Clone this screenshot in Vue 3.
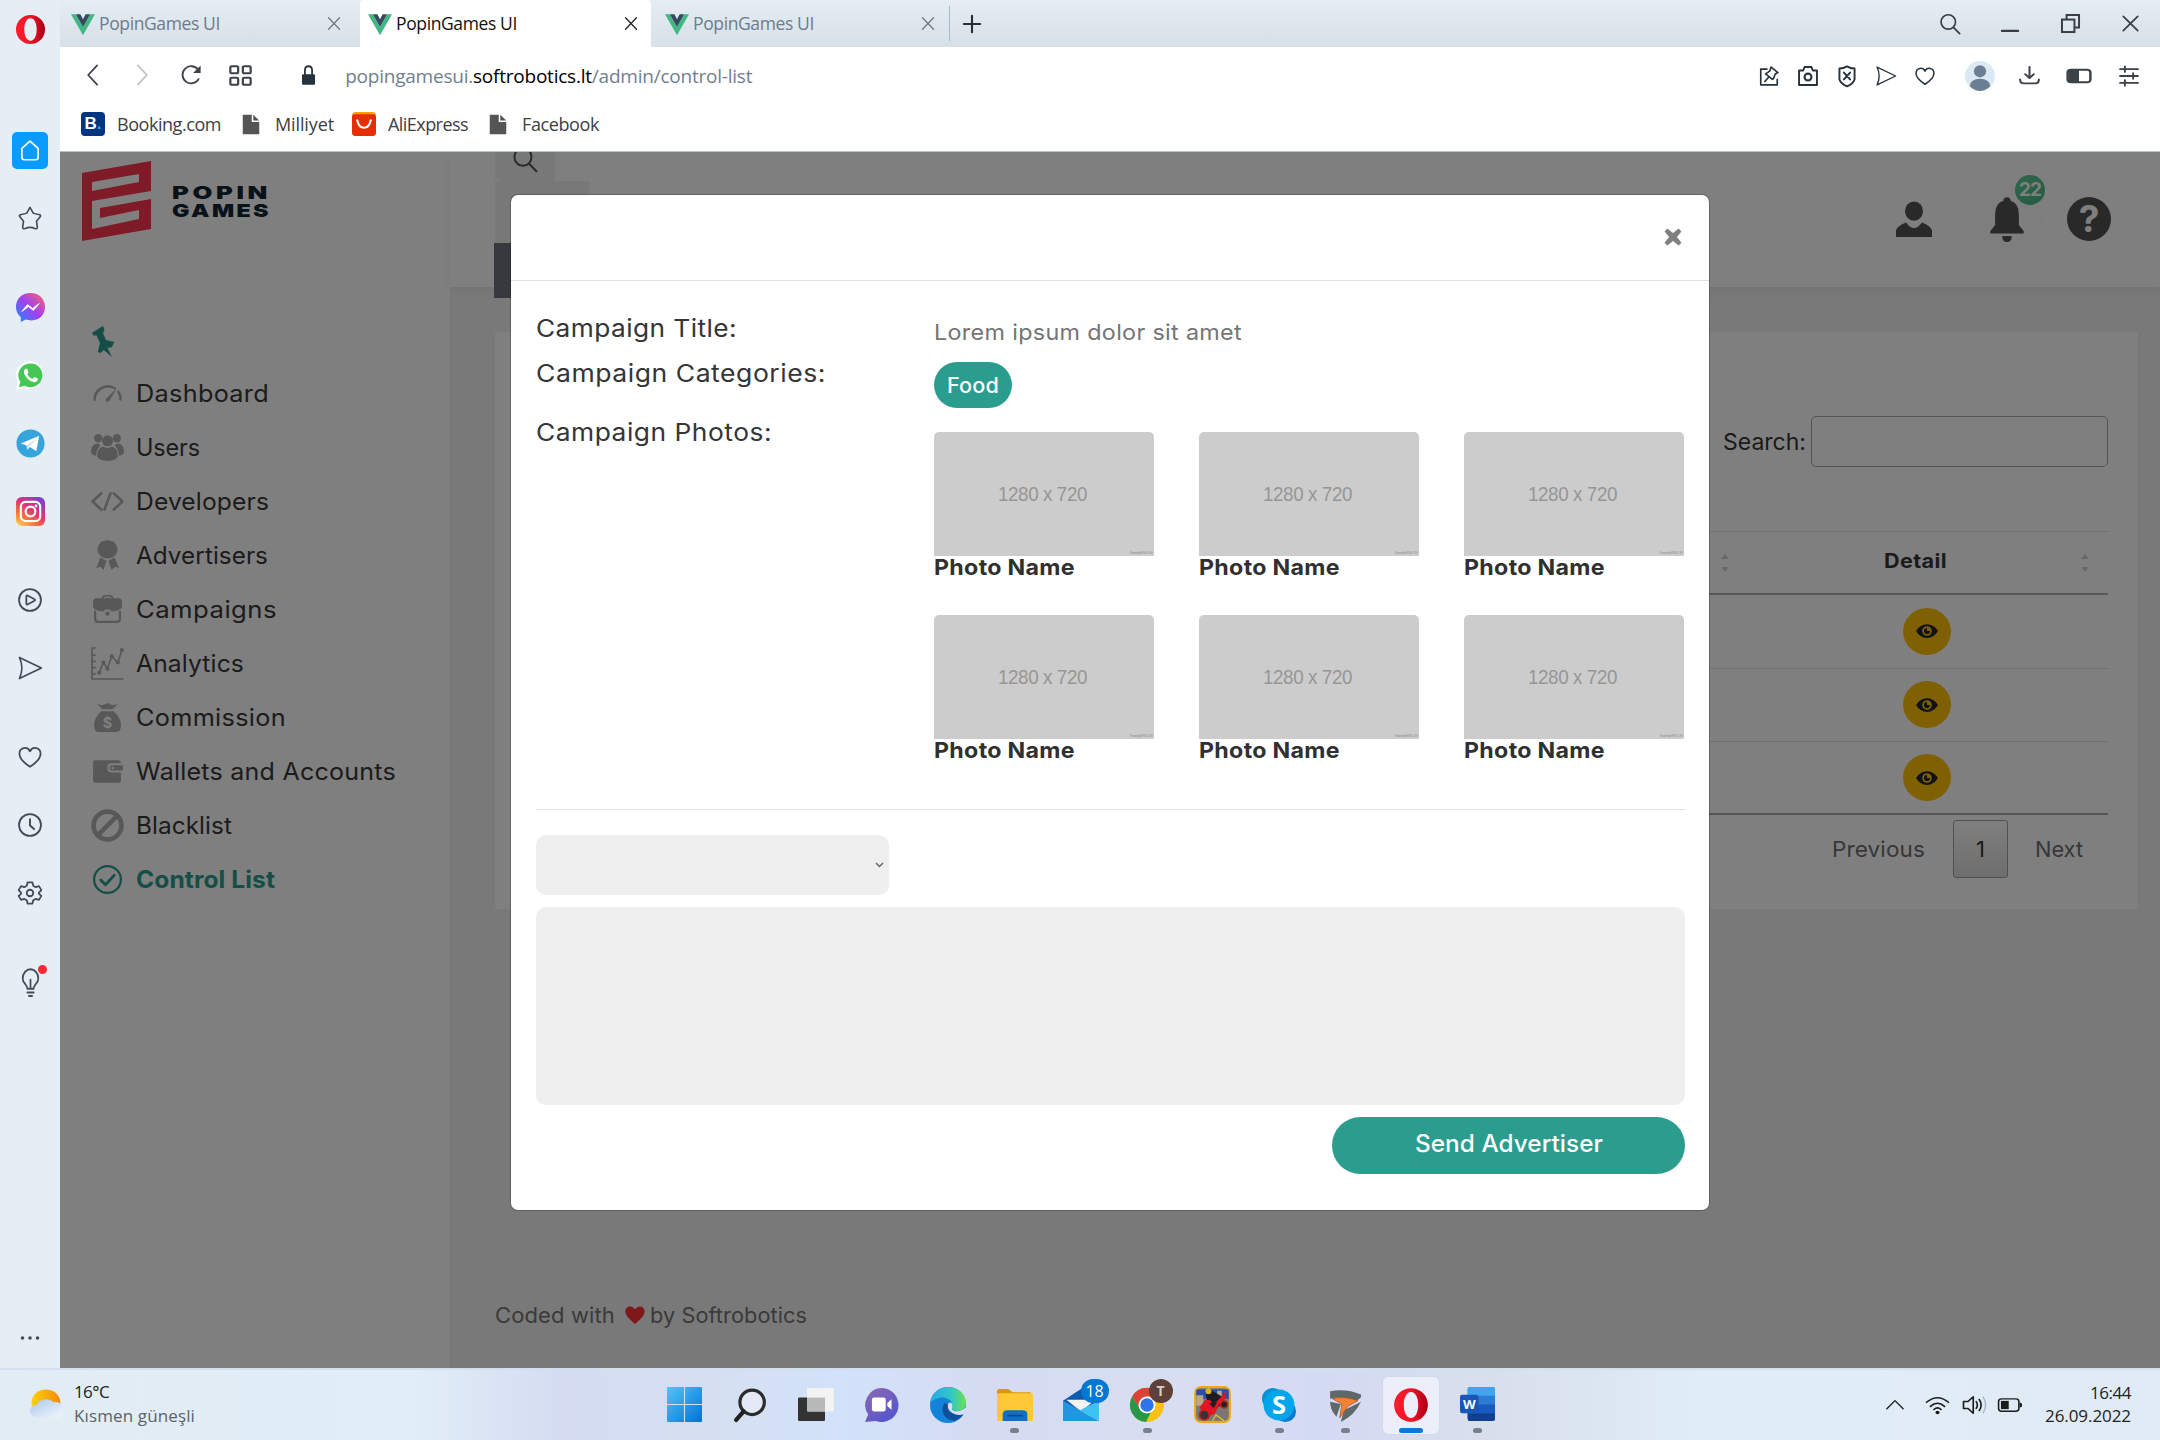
<script setup>
import { h } from 'vue'

// Fits a label to the given width in pixels, by letter spacing alone or,
// with the .wide modifier, mostly by widening the letters themselves.
const vFit = {
  mounted(el, { value, modifiers }) {
    const natural = el.getBoundingClientRect().width
    const share = modifiers.wide ? 0.3 : 1
    el.style.letterSpacing = ((value - natural) * share) / el.textContent.length + 'px'
    if (modifiers.wide) {
      const spaced = natural + (value - natural) * share
      el.style.display = 'inline-block'
      el.style.width = value + 'px'
      el.style.textAlign = 'left'
      el.style.transformOrigin = '0 50%'
      el.style.transform = `scaleX(${value / spaced})`
    }
  },
}

const line = (d, w = 2) =>
  `<path d="${d}" fill="none" stroke="currentColor" stroke-width="${w}" stroke-linecap="round" stroke-linejoin="round"/>`
const fill = (d, c = 'currentColor') => `<path d="${d}" fill="${c}"/>`

const icons = {
  opera: '<defs><linearGradient id="op" x1="0" x2="1"><stop offset="0" stop-color="#ff1b2d"/><stop offset=".5" stop-color="#f01528"/><stop offset="1" stop-color="#a70014"/></linearGradient></defs><path fill-rule="evenodd" fill="url(#op)" d="M16 1a15 15 0 1 0 0 30a15 15 0 1 0 0-30M16 4.500c4 0 6.400 5 6.400 11.500S20 27.500 16 27.500S9.600 22.500 9.600 16S12 4.500 16 4.500"/>',
  home: line('M16 5L26 14V25Q26 28 23 28H9Q6 28 6 25V14Z'),
  star: line('M16 3L20 10Q22 11 28 12Q30 13 28 15L24 20L25 27Q25 30 22 29Q16 26 10 29Q7 30 7 27L8 20L4 15Q2 13 4 12Q10 11 12 10Z'),
  messenger: '<defs><linearGradient id="ms" x1="0" y1="1" x2="1" y2="0"><stop offset="0" stop-color="#1690ff"/><stop offset=".5" stop-color="#a040f0"/><stop offset="1" stop-color="#ff6968"/></linearGradient></defs><path fill="url(#ms)" d="M16 1C7 1 1 7 1 15.500C1 20 3 23.500 6 26V31L11 28.500C24 32 31 24 31 15.500C31 7 25 1 16 1"/><path d="M7 20L13 13L18 17L25 12L19 19L14 15Z" fill="#fff" stroke="#fff" stroke-linejoin="round"/>',
  whatsapp: '<path fill="#fff" d="M16 1A14.500 14.500 0 0 0 3 23L1 31L9.500 29A14.500 14.500 0 1 0 16 1"/><path fill="#45c655" d="M16 3.500A12.300 12.300 0 0 0 5.500 22.500L4 28L10 26.500A12.300 12.300 0 1 0 16 3.500"/><path fill="#fff" d="M11 9C9 10 8.500 13 10.500 16C13 20 16 22.500 20 23C23 22.500 24 20.500 23.500 19L20 17.500L18 19.500C15.500 18.500 14 17 12.800 14.500L14 12.800L12.500 9Z"/>',
  telegram: '<circle cx="16" cy="16" r="14.500" fill="#36a5dc"/><path fill="#fff" d="M6 16L25 8L22 24L15.500 19.500L12.500 22.500L12 18Z"/><path fill="#c8dff0" d="M12 18L22 11L14.500 19L12.500 22.500Z"/>',
  instagram: '<defs><linearGradient id="ig" x1=".1" y1="1" x2=".8" y2="0"><stop offset="0" stop-color="#ffd35c"/><stop offset=".3" stop-color="#fb7036"/><stop offset=".6" stop-color="#dc3279"/><stop offset="1" stop-color="#7b42cc"/></linearGradient></defs><rect x="1" y="1" width="30" height="30" rx="6" fill="url(#ig)"/><g fill="none" stroke="#fff" stroke-width="2.200"><rect x="6" y="6" width="20" height="20" rx="5"/><circle cx="16" cy="16" r="5"/></g><circle cx="21.700" cy="10.300" r="1.400" fill="#fff"/>',
  play: '<circle cx="16" cy="16" r="13.500" fill="none" stroke="currentColor" stroke-width="2.200"/>' + line('M11.500 11Q12 10 13 10.500L21.500 15Q23 16 21.500 17L13 21.500Q11.500 22 11.500 21Z', 2.2),
  send: line('M3 3L30 16L3 29Q9 16 3 3Z'),
  heart: line('M16 28C9 23.500 3 18 3 12C3 4 13 2.500 16 9C19 2.500 29 4 29 12C29 18 23 23.500 16 28Z', 2.2),
  clock: '<circle cx="16" cy="16" r="13.500" fill="none" stroke="currentColor" stroke-width="2.200"/>' + line('M16 9V16.500L21 21', 2.4),
  gear: line('M13 3H19L20 7L23 8.800L27 7.500L30 12.500L27 15.500V17L30 19.500L27 24.500L23 23.300L20 25L19 29H13L12 25L9 23.300L5 24.500L2 19.500L5 17V15.500L2 12.500L5 7.500L9 8.800L12 7Z', 2.2) + '<circle cx="16" cy="16" r="4" fill="none" stroke="currentColor" stroke-width="2.200"/>',
  bulb: line('M12 23C12 18 6 17 6 11.500A10 10 0 0 1 26 11.500C26 17 20 18 20 23ZM12 27H20M14 31H18M16 22V13', 2.2),
  dots: '<g fill="currentColor"><circle cx="6" cy="16" r="2.400"/><circle cx="16" cy="16" r="2.400"/><circle cx="26" cy="16" r="2.400"/></g>',
  vue: fill('M0 3H6.500L16 20L25.500 3H32L16 31Z', '#41b883') + fill('M6.500 3H12.500L16 9.500L19.500 3H25.500L16 20Z', '#35495e'),
  x: line('M5 5L27 27M27 5L5 27', 2.6),
  plus: line('M16 3V29M3 16H29', 3.4),
  search: '<circle cx="13.500" cy="13" r="10.500" fill="none" stroke="currentColor" stroke-width="2.400"/>' + line('M21 21L30 30', 2.6),
  min: line('M3 27H29', 3.4),
  restore: '<g fill="none" stroke="currentColor" stroke-width="3"><path d="M10 10V3H29V22H23"/><rect x="3" y="10" width="19" height="19"/></g>',
  back: line('M22 2L9 16L22 30', 2.6),
  fwd: line('M10 2L23 16L10 30', 2.6),
  reload: line('M27 22A12.500 12.500 0 1 1 26 8', 2.6) + fill('M30 2V13H19Z'),
  grid: '<g fill="none" stroke="currentColor" stroke-width="2.800"><rect x="3" y="3" width="10" height="10" rx="2"/><rect x="19" y="3" width="10" height="10" rx="2"/><rect x="3" y="19" width="10" height="10" rx="2"/><rect x="19" y="19" width="10" height="10" rx="2"/></g>',
  lock: '<rect x="5" y="14" width="22" height="16" rx="2" fill="currentColor"/>' + line('M10 15V8Q10 2 16 2Q22 2 22 8V15', 3),
  pinbox: line('M13 6H4V29H28V21M19 3L29 11L25 13L23 19L21 21L11 13L17 9ZM16 17L10 24', 2.4),
  camera: line('M3 8H9L11 3H21L23 8H29V29H3Z', 2.8) + '<circle cx="16" cy="17.500" r="5" fill="none" stroke="currentColor" stroke-width="3"/>',
  shield: line('M16 2Q21 5 27 5V21Q25 27 16 31Q7 27 5 21V5Q11 5 16 2ZM11.500 11L20.500 21M20.500 11L11.500 21', 2.8),
  avatar: '<circle cx="16" cy="16" r="16" fill="#dce8f3"/><circle cx="16" cy="11" r="6.500" fill="#6a7f94"/><path fill="#6a7f94" d="M5 27Q6 19 16 19Q26 19 27 27Q22 32 16 32Q10 32 5 27"/>',
  download: line('M16 3V19M10 14L16 20L22 14M3 22Q3 28 8 28H24Q29 28 29 22', 2.8),
  split: '<rect x="2" y="6" width="28" height="20" rx="4" fill="none" stroke="currentColor" stroke-width="3"/>' + fill('M3 6H16V26H3Z'),
  sliders: line('M3 6H29M3 16H29M3 26H29M10 2V10M22 12V20M10 22V30', 2.8),
  file: fill('M5 1H17V12H27V31H5Z', '#555') + fill('M19 1L27 10H19Z', '#555'),
  ali: '<rect x="0" y="0" width="32" height="32" rx="5" fill="#ff9a00"/><path fill="#e62e04" d="M0 7Q0 3 4 3H28Q32 3 32 7V27Q32 32 27 32H5Q0 32 0 27Z"/><path d="M7 11Q9 21 16 21Q23 21 25 11" fill="none" stroke="#fff" stroke-width="2.800" stroke-linecap="round"/>',
  emblem: '<path fill="#ff344e" fill-rule="evenodd" d="M0 12L69 0V30L10 40V68L57 58V49L18 57V47L69 38V68L0 80ZM10 21V30L57 21V13Z"/>',
  pin: fill('M1 8L16 1L18 5L16 8L20 15L31 17L28 22L22 23L28 32L17 25L13 28L9 27L12 18L7 10L4 11Z'),
  gauge: '<path d="M3.500 23A13 13 0 0 1 24 11.500M26 13.500A13 13 0 0 1 28.500 23" fill="none" stroke="currentColor" stroke-width="2.300"/>' + fill('M25 11L17.500 23.500A2 2 0 0 1 14.500 21Z'),
  users: '<g fill="currentColor"><circle cx="7" cy="7" r="4"/><circle cx="25" cy="7" r="4"/><path d="M0 20Q0 12 7 12L9 14Q5 18 5 24Q0 23 0 20M32 20Q32 12 25 12L23 14Q27 18 27 24Q32 23 32 20"/><circle cx="16" cy="9.500" r="5.300"/><path d="M6 25Q6 16 12 15Q16 18 20 15Q26 16 26 25Q24 29 16 29Q8 29 6 25"/></g>',
  code: line('M10 8L1.500 16L10 24M22 8L30.500 16L22 24M19 8L13 24', 2.4),
  award: fill('M16 1L19 2L22 2.500L24 5L25.500 8L25.500 12L24 15L21 18L16 19L11 18L8 15L6.500 12L6.500 8L8 5L10 2.500L13 2ZM9 18L15 21L12 30L9 27L5 28ZM23 18L17 21L20 30L23 27L27 28Z'),
  bag: fill('M2 9Q2 5 5 5H10Q11 2 13 2H19Q21 2 22 5H27Q30 5 30 9V14Q27 18 19 18V16H13V18Q5 18 2 14Z') + line('M4 18V25Q4 28 7 28H25Q28 28 28 25V18', 2.2) + '<circle cx="16" cy="20" r="2" fill="currentColor"/><path d="M12.500 5.500Q13 4 14.500 4H17.500Q19 4 19.500 5.500" stroke="#fff" stroke-width="1.200" fill="none"/>',
  chart: line('M4 1H1V31H31M1 8H4M1 14H4M1 20H4M1 26H4M8 25L12 15L16 21L20 9L26 15L30 3', 1.6) + '<g fill="currentColor"><circle cx="8" cy="25" r="2"/><circle cx="12" cy="15" r="2"/><circle cx="16" cy="21" r="2"/><circle cx="20" cy="9" r="2"/><circle cx="26" cy="15" r="2"/><circle cx="30" cy="3" r="2"/></g>',
  money: fill('M6 3L11 4L16 2L21 4L26 3L21 8H11ZM10 10H22Q29 16 29 24Q29 30 25 30H7Q3 30 3 24Q3 16 10 10') + '<text x="16" y="26" text-anchor="middle" font-family="Inter, sans-serif" font-weight="700" font-size="14" fill="#fff">$</text>',
  wallet: fill('M4 5H26Q29 5 29 8H20Q16 8 16 12Q16 17 20 17H29V25Q29 27 27 27H4Q2 27 2 25V7Q2 5 4 5M20 10H31V15H20Q18 15 18 12.500Q18 10 20 10') + '<circle cx="21" cy="12.500" r="1.200" fill="#fff"/>',
  ban: '<circle cx="16" cy="16" r="13.500" fill="none" stroke="currentColor" stroke-width="4.500"/><path d="M25 7L7 25" stroke="currentColor" stroke-width="4.500"/>',
  check: '<circle cx="16" cy="16" r="13" fill="none" stroke="currentColor" stroke-width="2.200"/>' + line('M9.500 16.500L14 21L22.500 12', 2.8),
  user: '<ellipse cx="16" cy="9" rx="8" ry="8.500" fill="currentColor"/>' + fill('M0 32V26Q1 22 9 19Q16 29 23 19Q31 22 32 26V32Z'),
  bell: fill('M16 1Q19 1 19 4Q26 6 26 15V24L30 29V31H2V29L6 24V15Q6 6 13 4Q13 1 16 1M12 33H20Q20 38 16 38Q12 38 12 33'),
  eye: '<path fill="currentColor" fill-rule="evenodd" d="M0 16Q6 6 16 6Q26 6 32 16Q26 26 16 26Q6 26 0 16M16 9A7 7 0 1 0 16 23A7 7 0 1 0 16 9"/><path fill="currentColor" d="M16 11.500A4.500 4.500 0 1 0 20.500 16H16Z"/>',
  love: fill('M16 29C8 22 2 17 2 11C2 3 12 1 16 8C20 1 30 3 30 11C30 17 24 22 16 29'),
  cross: fill('M6 1L16 9L26 1L31 6L23 16L31 26L26 31L16 23L6 31L1 26L9 16L1 6Z'),
  weather: '<defs><linearGradient id="sn" x1="0" x2="1"><stop offset="0" stop-color="#ffcf08"/><stop offset="1" stop-color="#f28c0c"/></linearGradient><linearGradient id="cl" x1="0" y1="0" x2="1" y2="1"><stop offset="0" stop-color="#a9c6ef"/><stop offset="1" stop-color="#f4f7fb"/></linearGradient></defs><circle cx="15" cy="14" r="13.500" fill="url(#sn)"/><path fill="url(#cl)" d="M7 30A6.500 6.500 0 0 1 6 17A9.500 9 0 0 1 22 14Q31 13 31.500 22Q31 30 25 30Z"/>',
  win: '<defs><linearGradient id="wn" x1="0" y1="0" x2="1" y2="1"><stop offset="0" stop-color="#4cc8fb"/><stop offset="1" stop-color="#0a6fd0"/></linearGradient></defs><path fill="url(#wn)" d="M0 1Q0 0 1 0H15.500V15.500H0ZM16.500 0H31Q32 0 32 1V15.500H16.500ZM0 16.500H15.500V32H1Q0 32 0 31ZM16.500 16.500H32V31Q32 32 31 32H16.500Z"/>',
  find: '<circle cx="18" cy="13.500" r="11.500" fill="#e3e8f5" stroke="#2b2b2b" stroke-width="3"/><path d="M10 22L3 30" stroke="#222" stroke-width="4" stroke-linecap="round"/>',
  tasks: '<rect x="0" y="9" width="24" height="22" rx="1" fill="#333"/><rect x="8" y="0" width="24" height="22" rx="1" fill="#f3f3f3"/><rect x="8" y="9" width="16" height="13" fill="#b9b9b9"/>',
  chat: '<defs><linearGradient id="ch" x1="0" y1="0" x2=".7" y2="1"><stop offset="0" stop-color="#9068b4"/><stop offset="1" stop-color="#5357cc"/></linearGradient></defs><path fill="url(#ch)" d="M16 0A16 16 0 1 1 10 31L0 32L3 25A16 16 0 0 1 16 0"/><rect x="6.500" y="9" width="13" height="13" rx="2" fill="#fff"/><path fill="#fff" d="M21 14L25 10.500V20.500L21 17Z"/>',
  edge: '<defs><linearGradient id="e1" x1="0" x2="1"><stop offset="0" stop-color="#27a9e6"/><stop offset=".6" stop-color="#32c7c5"/><stop offset="1" stop-color="#6be24a"/></linearGradient></defs><circle cx="16" cy="16" r="16" fill="#1283d8"/><path fill="url(#e1)" d="M0 14C2 4 9 0 16 0C27 0 32 8 32 14C32 20 27 22 22 21C18 20 20 18 20 16C20 12 16 10 11 9Q4 10 0 14"/><path fill="#114f9d" d="M13 14C8 22 14 30 22 30Q28 28 30 23Q24 26 19 23C15 21 16 18 16 16Z"/><path fill="#d8e0f5" d="M16 15Q19 12 20 16C20 19 18 20 22 21.500Q28 22 32 18V20L30 24Q25 26 20 23Q15 20 16 15"/>',
  folder: '<path fill="#d99a00" d="M0 3Q0 1 2 1H10L14 4H30V10H0Z"/><rect x="0" y="5" width="32" height="26" rx="1" fill="#ffc936"/><path fill="#0f6fc4" d="M5 31V25Q5 21 9 21H23Q27 21 27 25V31Z"/><path stroke="#06478f" stroke-width="1.500" d="M9 26H23"/>',
  mail: '<path fill="#0b5cae" d="M0 12L16 1L32 12V22H0Z"/><path fill="#f2f2f2" d="M3 11H29L16 22Z"/><path fill="#2095e0" d="M0 12L32 31H0Z"/><path fill="#3fc1f3" d="M32 12V31L15 21Z"/>',
  chrome: '<circle cx="16" cy="16" r="16" fill="#fbc116"/><path fill="#dd4034" d="M2 8A16 16 0 0 1 30 8H16L9 20Z"/><path fill="#279847" d="M2 8L10 21L20 22L15 32A16 16 0 0 1 2 8"/><circle cx="16" cy="16" r="8" fill="#fff"/><circle cx="16" cy="16" r="6.300" fill="#2f74ea"/>',
  moto: '<rect x="1" y="1" width="30" height="30" rx="5" fill="#777" stroke="#eca915" stroke-width="1.800"/><path fill="#284eae" d="M2 3H30V11H2Z"/><path fill="#b9a88a" d="M2 8H8V17H2ZM20 4H24V10H20Z"/><path fill="#1d1c21" d="M10 5Q13 1 17 5L24 9L27 14L20 19L12 18Z"/><circle cx="12.500" cy="4.500" r="2.600" fill="#dcb21c"/><circle cx="9" cy="25" r="4.200" fill="#333" stroke="#c81b1b" stroke-width="1.500"/><circle cx="26" cy="16" r="3" fill="#222" stroke="#b22" stroke-width="1.300"/><path fill="#e21622" d="M5 18L10 12L14 12L17 16L23 10L27 5L27 11L22 16L18 24L13 26L12 21L6 21Z"/><path fill="#1d1c21" d="M13 15L20 14L17 19Z"/><path stroke="#dfc528" fill="none" d="M16 30L19 25L26 30"/>',
  skype: '<circle cx="10" cy="10" r="10" fill="#0c91d4"/><circle cx="22" cy="22" r="10" fill="#0b78d4"/><circle cx="16" cy="16" r="14.500" fill="#00a5ea"/><text x="16" y="24.500" text-anchor="middle" font-family="Open Sans, sans-serif" font-weight="700" font-size="24" fill="#fff">S</text>',
  tri: '<path fill="#5f686b" d="M2 3Q17 0 31 6V9L27 12Q14 7 2 10ZM2 13L12 15L8 27Q2 21 2 13M31 13Q25 26 12 32L15 21Z"/><path fill="#f58231" stroke="#a2501f" stroke-width=".7" d="M4 10Q16 7 28 12L19 17L11 28L13 15Z"/>',
  word: '<rect x="7" y="0" width="25" height="31" rx="2" fill="#2b7cd3"/><path fill="#41a5ee" d="M9 0H30Q32 0 32 2V8H7V2Q7 0 9 0"/><path fill="#185abd" d="M7 16H32V24H7Z"/><path fill="#103f91" d="M7 24H32V29Q32 31 30 31H9Q7 31 7 29Z"/><rect x="0" y="7" width="17" height="17" rx="2" fill="#1857b8"/><text x="8.500" y="20" text-anchor="middle" font-family="Open Sans, sans-serif" font-weight="700" font-size="12" fill="#fff">W</text>',
  up: line('M3 22L16 9L29 22', 2.2),
  wifi: line('M2 12Q16 -1 30 12M7 18Q16 9 25 18M11.500 22.500Q16 18 20.500 22.500', 2.2) + '<circle cx="16" cy="27" r="2.600" fill="currentColor"/>',
  sound: line('M2 11H8L15 4V28L8 21H2ZM19 11Q22 16 19 21M23 8Q28 16 23 24', 2.2) + '<path d="M28 4Q35 16 28 28" fill="none" stroke="#a9b0bd" stroke-width="1.800"/>',
  batt: '<rect x="2" y="7" width="26" height="18" rx="4" fill="none" stroke="currentColor" stroke-width="2"/><rect x="5" y="10" width="10" height="12" fill="currentColor"/><path fill="currentColor" d="M29 12L32 14V18L29 20Z"/>',
}

const Ico = (p) =>
  h('svg', { width: p.w || 26, height: p.h || p.w || 26, viewBox: p.box || '0 0 32 32', innerHTML: icons[p.n], preserveAspectRatio: 'none' })
Ico.props = ['n', 'w', 'h', 'box']

const rail = [
  ['home', 'star'],
  ['messenger', 'whatsapp', 'telegram', 'instagram'],
  ['play', 'send'],
  ['heart', 'clock', 'gear'],
]
const brands = ['messenger', 'whatsapp', 'telegram', 'instagram']
const menu = [
  ['gauge', 'Dashboard', 133],
  ['users', 'Users', 64],
  ['code', 'Developers', 133],
  ['award', 'Advertisers', 132],
  ['bag', 'Campaigns', 141],
  ['chart', 'Analytics', 108],
  ['money', 'Commission', 150],
  ['wallet', 'Wallets and Accounts', 260],
  ['ban', 'Blacklist', 96],
  ['check', 'Control List', 139],
]
const apps = [
  { n: 'win', w: 35 },
  { n: 'find', w: 34 },
  { n: 'tasks', w: 36, h: 34 },
  { n: 'chat', w: 34 },
  { n: 'edge', w: 36 },
  { n: 'folder', w: 36, h: 34, open: 1 },
  { n: 'mail', w: 36, h: 34, badge: '18' },
  { n: 'chrome', w: 34, open: 1, badge: 'T' },
  { n: 'moto', w: 37 },
  { n: 'skype', w: 34, open: 1 },
  { n: 'tri', w: 34, open: 1 },
  { n: 'opera', w: 36, active: 1 },
  { n: 'word', w: 35, open: 1 },
]
</script>

<template>
  <div class="screen">
    <div class="browser">
      <aside class="rail">
        <div class="logo"><Ico n="opera" :w="31" /></div>
        <div v-for="(g, i) in rail" :key="i" class="group">
          <div v-for="n in g" :key="n" class="slot" :class="{ home: n === 'home' }">
            <span><Ico :n="n" :w="brands.includes(n) ? 31 : 26" /></span>
          </div>
        </div>
        <div class="slot bulb"><span><Ico n="bulb" :w="25" :h="29" /><i></i></span></div>
        <div class="slot more"><Ico n="dots" :w="24" /></div>
      </aside>

      <div class="window">
        <div class="tabs">
          <div class="tab one"><Ico n="vue" :w="24" /><span v-fit="121">PopinGames UI</span><Ico n="x" :w="17" class="close" /></div>
          <div class="tab on"><Ico n="vue" :w="24" /><span v-fit="121">PopinGames UI</span><Ico n="x" :w="17" class="close" /></div>
          <div class="tab three"><Ico n="vue" :w="24" /><span v-fit="121">PopinGames UI</span><Ico n="x" :w="17" class="close" /></div>
          <Ico n="plus" :w="20" class="plus" />
          <div class="ctl">
            <div><Ico n="search" :w="22" /></div>
            <div><Ico n="min" :w="20" /></div>
            <div><Ico n="restore" :w="21" /></div>
            <div><Ico n="x" :w="21" class="dark" /></div>
          </div>
        </div>
        <div class="address">
          <div class="nav">
            <div><Ico n="back" :w="22" /></div>
            <div class="off"><Ico n="fwd" :w="22" /></div>
            <div><Ico n="reload" :w="22" /></div>
            <div><Ico n="grid" :w="25" :h="23" /></div>
          </div>
          <Ico n="lock" :w="19" :h="21" class="lock" />
          <span v-fit="407" class="url">popingamesui.<b>softrobotics.lt</b>/admin/control-list</span>
          <div class="tools">
            <div v-for="n in ['pinbox', 'camera', 'shield', 'send', 'heart']" :key="n"><Ico :n="n" :w="22" /></div>
          </div>
          <div class="tools wide">
            <div><Ico n="avatar" :w="30" /></div>
            <div><Ico n="download" :w="23" :h="21" /></div>
            <div><Ico n="split" :w="26" :h="20" /></div>
            <div><Ico n="sliders" :w="22" /></div>
          </div>
        </div>
        <div class="marks">
          <i class="bk">B<em>.</em></i><span v-fit="104">Booking.com</span>
          <Ico n="file" :w="24" :h="21" /><span v-fit="59">Milliyet</span>
          <Ico n="ali" :w="24" /><span v-fit="80">AliExpress</span>
          <Ico n="file" :w="24" :h="21" /><span v-fit="77">Facebook</span>
        </div>

        <div class="page">
          <nav class="side">
            <div class="brand">
              <Ico n="emblem" :w="69" :h="80" box="0 0 69 80" />
              <div><span v-fit.wide="99">POPIN</span><span v-fit.wide="99">GAMES</span></div>
            </div>
            <Ico n="pin" :w="24" :h="32" class="pin" />
            <div v-for="m in menu" :key="m[1]" class="item" :class="{ sel: m[0] === 'check' }">
              <Ico :n="m[0]" :w="33" /><span v-fit.wide="m[2]">{{ m[1] }}</span>
            </div>
          </nav>
          <main class="main">
            <header class="top">
              <div class="peek">
                <div class="glass"><Ico n="search" :w="26" :h="27" /></div>
                <div class="pale"></div>
                <div class="slate"></div>
              </div>
              <div class="acts">
                <Ico n="user" :w="36" />
                <div class="bell"><Ico n="bell" :w="38" :h="46" box="0 0 32 38" /><i>22</i></div>
                <div class="help">?</div>
              </div>
            </header>
            <section class="card">
              <div class="search"><span v-fit.wide="83">Search:</span><i></i></div>
              <div class="thead">
                <div class="sort s1"><i></i><i class="d"></i></div>
                <span v-fit.wide="63">Detail</span>
                <div class="sort"><i></i><i class="d"></i></div>
              </div>
              <div v-for="r in 3" :key="r" class="row"><div><Ico n="eye" :w="22" /></div></div>
              <div class="pager"><span v-fit.wide="93">Previous</span><b>1</b><span v-fit.wide="48">Next</span></div>
            </section>
            <footer class="foot"><span v-fit.wide="120">Coded with</span><Ico n="love" :w="22" /><span v-fit.wide="157">by Softrobotics</span></footer>
          </main>

          <div class="veil">
            <div class="modal">
              <div class="mhead"><Ico n="cross" :w="18" /></div>
              <div class="mbody">
                <div class="line l1"><label v-fit.wide="201">Campaign Title:</label><div class="lorem"><span v-fit.wide="308">Lorem ipsum dolor sit amet</span></div></div>
                <div class="line l2"><label v-fit.wide="290">Campaign Categories:</label><span class="pill"><span v-fit.wide="52">Food</span></span></div>
                <div class="line l3">
                  <label v-fit.wide="236">Campaign Photos:</label>
                  <div class="photos">
                    <figure v-for="p in 6" :key="p">
                      <div class="ph"><span v-fit.wide="89">1280 x 720</span><small>Powered by HTML.COM</small></div>
                      <figcaption><span v-fit.wide="141">Photo Name</span></figcaption>
                    </figure>
                  </div>
                </div>
                <div class="rule"></div>
                <div class="select"><svg width="9" height="6" viewBox="0 0 9 6"><path d="M1 1L4.500 4.500L8 1" fill="none" stroke="#666" stroke-width="1.500" /></svg></div>
                <div class="area"></div>
                <button class="send"><span v-fit.wide="188">Send Advertiser</span></button>
              </div>
            </div>
          </div>
        </div>
      </div>
    </div>

    <div class="taskbar">
      <div class="wx"><Ico n="weather" :w="34" :h="30" /><div><span v-fit="35">16°C</span><span v-fit="121" class="dim">Kısmen güneşli</span></div></div>
      <div class="apps">
        <div v-for="a in apps" :key="a.n" class="app" :class="{ act: a.active }">
          <Ico :n="a.n" :w="a.w" :h="a.h" />
          <i v-if="a.badge" class="bdg" :class="{ t: a.badge === 'T' }">{{ a.badge }}</i>
          <i v-if="a.open || a.active" class="bar"></i>
        </div>
      </div>
      <div class="tray">
        <Ico n="up" :w="20" /><Ico n="wifi" :w="25" :h="22" /><Ico n="sound" :w="24" :h="22" /><Ico n="batt" :w="25" :h="22" />
      </div>
      <div class="time"><span v-fit="41">16:44</span><span v-fit="86">26.09.2022</span></div>
    </div>
  </div>
</template>

<style>
body { margin: 0; overflow: hidden; }
</style>

<style scoped>
* { box-sizing: border-box; }
svg { display: block; flex: none; overflow: visible; }
i, em { font-style: normal; }
span, label { white-space: nowrap; flex: none; }
.screen { width: 2160px; height: 1440px; display: flex; flex-direction: column; overflow: hidden; font-family: "Open Sans", "Noto Sans", sans-serif; color: #2b333b; }
.browser { height: 1368px; display: flex; }
.rail { width: 60px; height: 1368px; background: #e5edf5; display: flex; flex-direction: column; align-items: center; color: #434b55; }
.logo { height: 58px; padding-top: 14px; margin-bottom: 58px; }
.group { margin-bottom: 21px; }
.slot { width: 60px; height: 68px; display: flex; align-items: center; justify-content: center; }
.slot span { position: relative; }
.home span { width: 36px; height: 37px; border-radius: 5px; background: #0a9bff; color: #fff; display: flex; align-items: center; justify-content: center; }
.bulb i { position: absolute; right: -4px; top: -3px; width: 9px; height: 9px; border-radius: 50%; background: #ff2633; }
.more { margin-top: auto; height: 60px; }
.window { width: 2100px; display: flex; flex-direction: column; background: #fff; }
.tabs { height: 47px; display: flex; align-items: center; background: linear-gradient(#e4ecf4, #d8e0e7); font-size: 17.5px; color: #6c7c8a; }
.tab { height: 47px; display: flex; align-items: center; }
.tab span { margin: 0 0 1px 4px; }
.tab .close { margin-left: auto; color: #777; width: 16px; }
.tab.one { width: 300px; padding: 0 18px 0 11px; }
.tab.on { width: 291px; padding: 0 12px 0 8px; background: #fff; color: #111; border-radius: 4px 4px 0 0; }
.tab.on .close { color: #222; }
.tab.three { width: 299px; height: 35px; padding: 0 13px 0 14px; border-right: 1px solid #a9b9c8; }
.plus { margin-left: 12px; color: #2b2f33; }
.ctl { margin-left: auto; display: flex; color: #3a3e42; }
.ctl div { width: 60px; display: flex; justify-content: center; align-items: center; }
.address { height: 58px; display: flex; align-items: center; padding: 0 6px 1px 8px; color: #26323c; }
.nav { display: flex; color: #3c4248; }
.nav div { width: 49.300px; display: flex; justify-content: center; }
.nav .off { color: #c2c2c2; }
.lock { margin: 0 27px 0 34px; }
.url { font-size: 19px; color: #708090; }
.url b { font-weight: 400; color: #000; }
.tools { display: flex; margin-left: auto; }
.tools div { width: 39px; display: flex; justify-content: center; align-items: center; }
.tools.wide { margin-left: 11px; color: #3c4248; }
.tools.wide div { width: 49.700px; }
.marks { height: 47px; display: flex; align-items: center; padding: 0 0 8px 21px; font-size: 18px; color: #3d4043; border-bottom: 1px solid #b7c4cd; }
.marks > span { margin-left: 12px; margin-right: 18px; }
.bk { width: 24px; height: 24px; border-radius: 4px; background: #003580; color: #fff; font: 700 17px/23px "Liberation Sans", sans-serif; text-align: center; }
.bk em { color: #23a9f5; }
.page { position: relative; height: 1216px; display: flex; overflow: hidden; font-family: Inter, "Noto Sans", sans-serif; color: #363636; }
.side { width: 390px; background: #fff; }
.brand { display: flex; height: 173px; padding: 9px 0 0 22px; }
.brand div { display: flex; flex-direction: column; align-items: flex-start; margin: 23px 0 0 21px; font-weight: 900; font-size: 18px; line-height: 18px; color: #0f2433; }
.pin { margin: 0 0 9px 31px; color: #2a9d8f; }
.item { height: 54px; display: flex; align-items: center; padding-left: 31px; font-size: 24px; color: #b0b0b0; }
.item span { margin-left: 12px; color: #383838; }
.item.sel, .item.sel span { color: #2a9d8f; font-weight: 700; }
.main { width: 1710px; background: #f2f2f2; }
.top { height: 135px; background: #fff; display: flex; justify-content: space-between; box-shadow: 0 4px 12px rgba(0, 0, 0, .05); }
.peek { margin-left: 44px; }
.glass { width: 60px; height: 29px; margin-left: 1px; background: #f0f0f0; border-radius: 0 0 0 8px; padding: 0 0 0 17px; overflow: hidden; color: #555; }
.glass svg { margin-top: -6px; }
.pale { width: 94px; height: 62px; margin-left: 1px; background: #f0f0f0; }
.slate { width: 94px; height: 55px; background: #6c757d; }
.acts { display: flex; align-items: center; height: 134px; margin-right: 49px; color: #525252; }
.bell { position: relative; width: 75px; height: 75px; margin: 0 23px 0 37px; border-radius: 50%; background: #fdfdfd; display: flex; align-items: center; justify-content: center; }
.bell i { position: absolute; left: 46px; top: -7px; width: 30px; height: 30px; border-radius: 50%; background: linear-gradient(150deg, #62d094, #46b58c); color: #fff; font: 700 19px/30px Inter, sans-serif; text-align: center; letter-spacing: -1px; }
.help { width: 44px; height: 44px; border-radius: 50%; background: #525252; color: #fff; font-weight: 700; font-size: 37px; line-height: 44px; text-align: center; }
.card { width: 1643px; height: 577px; margin: 45px 0 0 45px; padding: 84px 30px 0; background: #fff; }
.search { display: flex; justify-content: flex-end; align-items: center; height: 51px; font-size: 23px; }
.search i { width: 297px; height: 51px; margin-left: 5px; border: 1.500px solid #aaa; border-radius: 5px; }
.thead { height: 64px; margin-top: 64px; border-top: 1px solid #dee2e6; border-bottom: 2px solid #b0b0b0; display: flex; align-items: center; justify-content: flex-end; font-weight: 700; font-size: 20px; padding: 0 19px 3px 0; }
.sort { width: 8px; display: flex; flex-direction: column; gap: 8px; margin-left: 134px; padding-top: 4px; }
.sort.s1 { margin: 0 155px 0 0; }
.sort i { border: 4px solid transparent; border-top: 0; border-bottom: 5px solid #d0d0d0; }
.sort .d { border-bottom: 0; border-top: 5px solid #d0d0d0; }
.row { height: 73.500px; border-bottom: 1px solid #dcdfe2; padding-right: 157px; display: flex; justify-content: flex-end; align-items: center; }
.row:nth-child(5) { border-bottom: 2px solid #aaa; height: 73px; }
.row div { width: 48px; height: 47px; border-radius: 50%; background: #ffc107; display: flex; align-items: center; justify-content: center; color: #212529; }
.pager { display: flex; justify-content: flex-end; align-items: center; height: 58px; margin: 5px 25px 0 0; font-size: 22px; color: #6f6f6f; }
.pager b { width: 55px; height: 58px; margin: 0 27px 0 28px; border: 1.500px solid #a0a0a0; border-radius: 3px; background: linear-gradient(#fff, #dcdcdc); font-weight: 400; color: #333; display: flex; align-items: center; justify-content: center; }
.foot { display: flex; align-items: center; margin: 392px 0 0 45px; height: 28px; font-size: 21.500px; color: #757575; }
.foot svg { margin: 0 4px 0 9px; color: #ff3035; }
.veil { position: absolute; inset: 0; background: rgba(0, 0, 0, .5); }
.modal { width: 1198px; height: 1015px; margin: 43px 0 0 451px; background: #fff; border-radius: 7px; box-shadow: 0 0 0 1px rgba(0, 0, 0, .2); color: #363636; }
.mhead { height: 86px; border-bottom: 1px solid #dee2e6; display: flex; justify-content: flex-end; align-items: center; padding: 0 27px 2px 0; color: #808080; }
.mbody { padding: 29px 24px 0 25px; display: flex; flex-direction: column; }
.line { display: flex; font-size: 24.500px; align-items: flex-start; }
.line label { flex: none; line-height: 36px; }
.l1 { height: 52px; justify-content: space-between; }
.lorem { width: 751px; font-size: 22px; color: #757575; line-height: 44px; }
.l2 { height: 52px; justify-content: space-between; }
.l2 label { margin-top: -7px; }
.pill { margin-right: 673px; width: 78px; height: 46px; border-radius: 23px; background: #2a9d8f; color: #fff; font-size: 21px; font-weight: 500; display: flex; align-items: center; justify-content: center; }
.l3 { justify-content: space-between; height: 395px; }
.photos { display: grid; grid-template-columns: repeat(3, 220px); column-gap: 45px; grid-auto-rows: 183px; padding-top: 18px; margin-right: 1px; }
figure { margin: 0; }
.ph { position: relative; height: 124px; background: #ccc; border-radius: 5px 5px 0 0; display: flex; align-items: center; justify-content: center; padding-right: 4px; font: 21px "Liberation Sans", sans-serif; color: #969696; }
.ph small { position: absolute; right: 2px; bottom: 1px; font-size: 4px; letter-spacing: -.8px; transform-origin: right; transform: scaleX(.8); color: #999; }
figcaption { font-weight: 700; font-size: 22px; line-height: 22px; color: #303030; }
.rule { height: 1px; background: #e2e2e2; }
.select { width: 353px; height: 60px; margin-top: 25px; background: #efefef; border-radius: 10px; display: flex; align-items: center; justify-content: flex-end; padding-right: 5px; }
.area { height: 198px; margin-top: 12px; background: #efefef; border-radius: 10px; }
.send { align-self: flex-end; width: 353px; height: 57px; margin-top: 12px; padding: 0 0 4px; border: 0; border-radius: 29px; background: #2a9d8f; color: #fff; font: 500 24px Inter, sans-serif; }
.taskbar { height: 72px; display: flex; align-items: center; border-top: 2px solid #d3dfec; background: linear-gradient(90deg, #e2ecf5 0, #e1eef7 19%, #d5dcf2 26%, #d5dff1 33%, #d2e2fa 39%, #d5dbf1 46%, #d8def1 55%, #d3daf3 61%, #d8dfec 69%, #e0edf7 79%, #e0eaf5 100%); }
.wx { display: flex; align-items: center; padding: 0 0 2px 30px; width: 651px; font-size: 17px; color: #222; }
.wx div { display: flex; flex-direction: column; align-items: flex-start; margin-left: 10px; line-height: 24px; }
.wx .dim { color: #5b636b; }
.apps { display: flex; }
.app { position: relative; width: 66.100px; height: 70px; display: flex; align-items: center; justify-content: center; padding-bottom: 1px; }
.app.act::before { content: ""; position: absolute; left: 5px; top: 7px; width: 56px; height: 57px; border-radius: 5px; background: #eceffa; box-shadow: 0 0 1px #b9bfd2; }
.app svg { position: relative; }
.bar { position: absolute; bottom: 7px; left: 29px; width: 9px; height: 5px; border-radius: 3px; background: #7b7f8c; }
.act .bar { left: 21px; width: 24px; background: #0f78d4; }
.bdg { position: absolute; left: 33px; top: 9px; width: 28px; height: 24px; border-radius: 12px; background: #0078d4; color: #fff; font-size: 16px; line-height: 24px; text-align: center; }
.bdg.t { left: 35px; width: 24px; background: #5d4038; font-weight: 700; color: #d5ccc9; font-size: 14px; }
.tray { display: flex; align-items: center; margin-left: 375px; color: #1c1c1c; padding-bottom: 1px; }
.tray svg:nth-child(2) { margin-left: 20px; }
.tray svg:nth-child(3) { margin-left: 12px; }
.tray svg:nth-child(4) { margin-left: 11px; }
.time { margin-left: auto; margin-right: 29px; padding-bottom: 3px; display: flex; flex-direction: column; align-items: flex-end; font-size: 17px; line-height: 23px; color: #222; }
</style>
